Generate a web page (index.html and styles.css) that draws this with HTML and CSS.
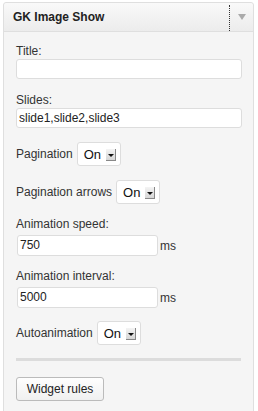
FILE: index.html
```html
<!DOCTYPE html>
<html lang="en">
  <head>
    <meta charset="UTF-8" />
    <meta name="viewport" content="width=device-width, initial-scale=1.0" />
    <title>GK Image Show</title>
    <link rel="stylesheet" href="styles.css">
  </head>
  <body>
    <div class="widget">
      <div class="widget-top">
        <h3 class="widget-title">GK Image Show</h3>
        <div class="widget-action"><span class="tri"></span></div>
      </div>

      <div class="widget-inside">
        <p class="field">
          <label>Title:</label>
          <span class="input wide"></span>
        </p>
        <p class="field">
          <label>Slides:</label>
          <span class="input wide">slide1,slide2,slide3</span>
        </p>
        <p class="row">
          <label>Pagination</label>
          <span class="select">On<span class="arrow"></span></span>
        </p>
        <p class="row">
          <label>Pagination arrows</label>
          <span class="select">On<span class="arrow"></span></span>
        </p>
        <p class="field num">
          <label>Animation speed:</label>
          <span class="inline"><span class="input short">750</span>ms</span>
        </p>
        <p class="field num">
          <label>Animation interval:</label>
          <span class="inline"><span class="input short">5000</span>ms</span>
        </p>
        <p class="row">
          <label>Autoanimation</label>
          <span class="select">On<span class="arrow"></span></span>
        </p>
        <hr class="sep" />
        <div><button class="button">Widget rules</button></div>
      </div>
    </div>
  </body>
</html>
```

FILE: styles.css
```css
body {
  margin: 0;
  font-family: "Liberation Sans", Arial, sans-serif;
  font-size: 12px;
  color: #333;
  background-color: #fff;
}
.widget {
  margin: 2px 0 0 3px;
  width: 249px;
  height: 420px;
  border: 1px solid #dfdfdf;
  border-radius: 3px 3px 0 0;
  background-color: #f5f5f5;
}
.widget-top {
  display: flex;
  height: 28px;
  border-bottom: 1px solid #dfdfdf;
  background: linear-gradient(#f9f9f9, #ececec);
  border-radius: 3px 3px 0 0;
}
.widget-title {
  flex: 1;
  margin: 0;
  padding-left: 9px;
  font-size: 12px;
  line-height: 28px;
  color: #222;
}
.widget-action {
  width: 24px;
  margin-top: 2px;
  border-left: 1px dotted #333;
  display: flex;
  justify-content: center;
  padding-top: 9px;
  box-sizing: border-box;
}
.tri {
  width: 0;
  height: 0;
  border-left: 4px solid transparent;
  border-right: 4px solid transparent;
  border-top: 6px solid #aaa;
}
.widget-inside {
  display: flex;
  flex-direction: column;
  padding: 12px 12px 0;
}
.field,
.row {
  margin: 0 0 14px;
}
.field label {
  display: block;
  line-height: 14px;
  margin-bottom: 1px;
}
.num {
  margin-bottom: 13px;
}
.num label {
  margin-bottom: 4px;
}
.input {
  display: block;
  box-sizing: border-box;
  height: 20px;
  border: 1px solid #ddd;
  border-radius: 3px;
  background: #fff;
  padding: 0 2px;
  font-size: 12px;
  line-height: 18px;
  color: #222;
}
.wide {
  width: 226px;
}
.inline {
  display: flex;
  align-items: center;
  gap: 2px;
}
.short {
  width: 141px;
  height: 21px;
  line-height: 19px;
  margin-left: 1px;
}
.row {
  display: flex;
  align-items: center;
}
.row:nth-of-type(4),
.row:last-of-type {
  margin-bottom: 13px;
}
.row label {
  margin-right: 4px;
}
.select {
  display: inline-flex;
  align-items: center;
  box-sizing: border-box;
  width: 44px;
  height: 24px;
  border: 1px solid #ddd;
  border-radius: 3px;
  background: #fff;
  padding: 0 0 0 6px;
  font-size: 13px;
  color: #111;
}
.arrow {
  position: relative;
  margin-left: 5px;
  width: 9px;
  height: 11px;
  margin-top: 2px;
  background: linear-gradient(#f4f4f4, #d6d6d6);
  border-right: 1px solid #888;
  border-bottom: 1px solid #888;
}
.arrow::after {
  content: "";
  position: absolute;
  left: 2px;
  top: 5px;
  border-left: 3px solid transparent;
  border-right: 3px solid transparent;
  border-top: 3px solid #111;
}
.sep {
  margin: 0 0 16px;
  height: 3px;
  border: none;
  background-color: #dcdcdc;
}
.button {
  font-family: "Liberation Sans", Arial, sans-serif;
  font-size: 12px;
  color: #222;
  height: 24px;
  width: 88px;
  padding: 0;
  border: 1px solid #bbb;
  border-radius: 3px;
  background: linear-gradient(#fefefe, #f0f0f0);
}
```
